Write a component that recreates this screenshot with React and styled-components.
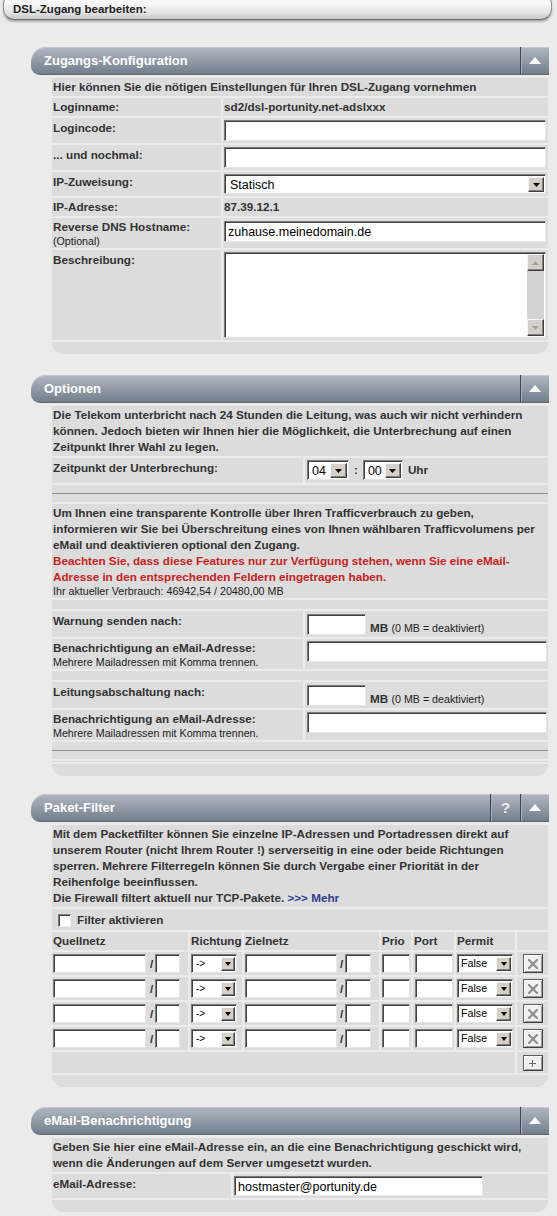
import React from 'react';
import styled, { createGlobalStyle } from 'styled-components';

const GlobalStyle = createGlobalStyle`
  html, body { margin: 0; padding: 0; background: #ebebeb; }
  body { font-family: "Liberation Sans", Arial, Helvetica, sans-serif; color: #333; }
  * { box-sizing: border-box; }
`;

const Page = styled.div`
  width: 557px;
  height: 1216px;
  overflow: hidden;
  background: #ebebeb;
`;

const TopBar = styled.div`
  margin: -7px 5px 0 3px;
  height: 27px;
  padding: 8px 0 0 9px;
  border: 1px solid #8e8e8e;
  border-bottom-color: #6a6a6a;
  border-radius: 11px;
  background: linear-gradient(#ffffff 0%, #f6f6f6 40%, #e2e2e2 75%, #c9c9c9 100%);
  box-shadow: 0 2px 2px rgba(0, 0, 0, 0.28);
  font-size: 11.5px;
  font-weight: bold;
  line-height: 14px;
  color: #222;
`;

const Sections = styled.div`
  padding: 27px 0 0 31px;
`;

const Section = styled.div`
  width: 518px;
  margin-bottom: ${(p) => p.$mb ?? 18}px;
`;

const HeaderBar = styled.div`
  display: flex;
  height: 28px;
  border-radius: 15px 0 0 9px;
  background: linear-gradient(#b0b7c2 0%, #969eab 45%, #737d8c 100%);
  border-bottom: 1px solid #5d6674;
  box-shadow: inset 0 1px 0 #c4c9d1;
`;

const HeaderTitle = styled.div`
  flex: 1;
  padding-left: 13px;
  font-size: 13px;
  font-weight: bold;
  line-height: 27px;
  color: #fff;
`;

const HeaderBtn = styled.div`
  width: ${(p) => p.$w ?? 29}px;
  display: flex;
  align-items: center;
  justify-content: center;
  border-left: 1px solid #3f4652;
  box-shadow: inset 1px 0 0 #a9b0bb;
  color: #ececec;
  font-size: 15px;
  font-weight: bold;
`;

const Table = styled.table`
  margin: 1px 0 0 19px;
  width: 500px;
  border-spacing: 2px;
  border-collapse: separate;
  table-layout: fixed;
`;

const Col = styled.col`
  width: ${(p) => p.$w}px;
`;

const Td = styled.td`
  background: #dcdcdc;
  padding: ${(p) => p.$pad ?? '1px'};
  vertical-align: ${(p) => p.$va ?? 'top'};
  text-align: ${(p) => p.$align ?? 'left'};
  font-size: 11.7px;
  font-weight: bold;
  line-height: 16px;
  color: #333;
  white-space: ${(p) => (p.$nowrap ? 'nowrap' : 'normal')};
  height: ${(p) => (p.$h ? `${p.$h}px` : 'auto')};
`;

const SpacerTd = styled.td`
  background: #dcdcdc;
  padding: 0;
  height: ${(p) => p.$h}px;
  font-size: 0;
  line-height: 0;
`;

const FooterTd = styled.td`
  background: #dcdcdc;
  padding: 0;
  height: 12px;
  border-radius: 0 0 11px 11px;
`;

const HrTd = styled.td`
  background: #dcdcdc;
  padding: 8px 0;
`;

const HrLine = styled.div`
  height: 1px;
  background: #8d8d8d;
`;

const Small = styled.span`
  display: block;
  font-size: 10.7px;
  font-weight: normal;
  line-height: 12px;
  color: #222;
`;

const InlineSmall = styled.span`
  font-size: 10.7px;
  font-weight: normal;
  color: #222;
`;

const Red = styled.span`
  color: #c9221d;
`;

const Link = styled.a`
  color: #2b3f8e;
  text-decoration: none;
`;

const Input = styled.input`
  display: block;
  width: ${(p) => p.$w}px;
  height: ${(p) => p.$h ?? 21}px;
  margin: 0;
  padding: 1px 2px 0 3px;
  border: 1px solid;
  border-color: #7b7b7b #e6e6e6 #e6e6e6 #7b7b7b;
  box-shadow: inset 1px 1px 0 #404040;
  background: #fff;
  font-family: "Liberation Sans", Arial, sans-serif;
  font-size: 12.5px;
  color: #000;
  outline: none;
`;

const SelectBox = styled.div`
  display: flex;
  align-items: stretch;
  width: ${(p) => p.$w}px;
  height: ${(p) => p.$h ?? 20}px;
  padding: 2px 1px 1px 2px;
  border: 1px solid;
  border-color: #7b7b7b #e6e6e6 #e6e6e6 #7b7b7b;
  box-shadow: inset 1px 1px 0 #404040;
  background: #fff;
`;

const SelectText = styled.span`
  flex: 1;
  padding-left: ${(p) => p.$pl ?? 3}px;
  font-size: ${(p) => p.$fs ?? 12.5}px;
  font-weight: normal;
  line-height: ${(p) => p.$lh ?? 16}px;
  color: #000;
  white-space: nowrap;
  overflow: hidden;
`;

const SelectBtn = styled.span`
  width: ${(p) => p.$w ?? 16}px;
  display: flex;
  align-items: center;
  justify-content: center;
  background: #d4d0c8;
  border: 1px solid;
  border-color: #f4f4f4 #404040 #404040 #f4f4f4;
  box-shadow: inset -1px -1px 0 #808080;
`;

const TextAreaBox = styled.div`
  display: flex;
  justify-content: flex-end;
  width: 322px;
  height: 86px;
  padding: 1px;
  border: 1px solid;
  border-color: #7b7b7b #e6e6e6 #e6e6e6 #7b7b7b;
  box-shadow: inset 1px 1px 0 #404040;
  background: #fff;
`;

const ScrollBar = styled.div`
  width: 17px;
  display: flex;
  flex-direction: column;
  background: #d3d3d3;
`;

const ScrollBtn = styled.div`
  height: 17px;
  display: flex;
  align-items: center;
  justify-content: center;
  background: #d4d0c8;
  border: 1px solid;
  border-color: #f4f4f4 #404040 #404040 #f4f4f4;
  box-shadow: inset -1px -1px 0 #808080;
`;

const ScrollTrack = styled.div`
  flex: 1;
`;

const TimeRow = styled.div`
  display: flex;
  align-items: center;
  gap: 5px;
  padding-top: 1px;
`;

const InputWithUnit = styled.div`
  display: flex;
  align-items: flex-end;
  gap: 4px;
  padding-top: 1px;
`;

const UnitText = styled.span`
  line-height: 16px;
  margin-bottom: -1px;
`;

const CheckRow = styled.label`
  display: flex;
  align-items: center;
  gap: 6px;
  padding: 2px 0 1px 5px;
`;

const CheckBox = styled.span`
  width: 13px;
  height: 13px;
  background: #fff;
  border: 1px solid;
  border-color: #808080 #f0f0f0 #f0f0f0 #808080;
  box-shadow: inset 1px 1px 0 #404040;
`;

const CellFlex = styled.div`
  display: flex;
  align-items: center;
  justify-content: ${(p) => p.$justify ?? 'flex-start'};
  padding: ${(p) => p.$pad ?? '0'};
`;

const Slash = styled.span`
  padding: 0 ${(p) => p.$pr ?? 2}px 0 ${(p) => p.$pl ?? 4}px;
  line-height: 16px;
`;

const IconBtn = styled.div`
  width: 20px;
  height: ${(p) => p.$h ?? 19}px;
  display: flex;
  align-items: center;
  justify-content: center;
  background: #efefef;
  border: 1px solid;
  border-color: #5c5c5c #404040 #404040 #5c5c5c;
  box-shadow: inset 1px 1px 0 #ffffff, inset -1px -1px 0 #9a9a9a;
`;

const Tri = ({ dir = 'up', color = '#fff', w = 12, h = 7 }) => (
  <svg width={w} height={h} viewBox={`0 0 ${w} ${h}`} style={{ display: 'block' }}>
    <polygon
      points={dir === 'up' ? `0,${h} ${w / 2},0 ${w},${h}` : `0,0 ${w},0 ${w / 2},${h}`}
      fill={color}
    />
  </svg>
);

const XIcon = () => (
  <svg width="10" height="10" viewBox="0 0 10 10" style={{ display: 'block' }}>
    <path d="M1 1 L9 9 M9 1 L1 9" stroke="#8e8e8e" strokeWidth="2.2" strokeLinecap="square" />
  </svg>
);

const PlusIcon = () => (
  <svg width="7" height="7" viewBox="0 0 7 7" style={{ display: 'block' }}>
    <path d="M3.5 0 V7 M0 3.5 H7" stroke="#666" strokeWidth="1" />
  </svg>
);

const Header = ({ title, help }) => (
  <HeaderBar>
    <HeaderTitle>{title}</HeaderTitle>
    {help && <HeaderBtn $w={30}>?</HeaderBtn>}
    <HeaderBtn>
      <Tri dir="up" color="#fff" w={12} h={7} />
    </HeaderBtn>
  </HeaderBar>
);

const Select = ({ w, h, text, fs, lh, bw, tw, th, pl }) => (
  <SelectBox $w={w} $h={h}>
    <SelectText $fs={fs} $lh={lh} $pl={pl}>{text}</SelectText>
    <SelectBtn $w={bw}>
      <Tri dir="down" color="#000" w={tw ?? 7} h={th ?? 4} />
    </SelectBtn>
  </SelectBox>
);

const FilterRow = () => (
  <tr>
    <Td $pad="2px 1px">
      <CellFlex>
        <Input $w={93} $h={19} readOnly />
        <Slash>/</Slash>
        <Input $w={25} $h={19} readOnly />
      </CellFlex>
    </Td>
    <Td $pad="2px 1px">
      <Select w={46} h={19} text="->" fs={10} lh={13} bw={14} tw={6} th={4} pl={2} />
    </Td>
    <Td $pad="2px 1px">
      <CellFlex>
        <Input $w={92} $h={19} readOnly />
        <Slash $pl={3}>/</Slash>
        <Input $w={26} $h={19} readOnly />
      </CellFlex>
    </Td>
    <Td $pad="2px 1px">
      <Input $w={28} $h={19} readOnly />
    </Td>
    <Td $pad="2px 1px 2px 2px">
      <Input $w={38} $h={19} readOnly />
    </Td>
    <Td $pad="2px 1px">
      <Select w={56} h={19} text="False" fs={10.7} lh={13} bw={15} tw={6} th={4} pl={1} />
    </Td>
    <Td $pad="2px 1px">
      <CellFlex $justify="center">
        <IconBtn>
          <XIcon />
        </IconBtn>
      </CellFlex>
    </Td>
  </tr>
);

export default function App() {
  return (
    <>
      <GlobalStyle />
      <Page>
        <TopBar>DSL-Zugang bearbeiten:</TopBar>
        <Sections>
          {/* Zugangs-Konfiguration */}
          <Section $mb={19}>
            <Header title="Zugangs-Konfiguration" />
            <Table>
              <colgroup>
                <Col $w={169} />
                <Col $w={325} />
              </colgroup>
              <tbody>
                <tr>
                  <Td colSpan={2} $nowrap>
                    Hier können Sie die nötigen Einstellungen für Ihren DSL-Zugang vornehmen
                  </Td>
                </tr>
                <tr>
                  <Td>Loginname:</Td>
                  <Td>sd2/dsl-portunity.net-adslxxx</Td>
                </tr>
                <tr>
                  <Td $pad="2px 1px">Logincode:</Td>
                  <Td $pad="2px 1px">
                    <Input $w={322} readOnly />
                  </Td>
                </tr>
                <tr>
                  <Td $pad="2px 1px">... und nochmal:</Td>
                  <Td $pad="2px 1px">
                    <Input $w={322} readOnly />
                  </Td>
                </tr>
                <tr>
                  <Td $pad="2px 1px">IP-Zuweisung:</Td>
                  <Td $pad="2px 1px">
                    <Select w={322} h={20} text="Statisch" />
                  </Td>
                </tr>
                <tr>
                  <Td>IP-Adresse:</Td>
                  <Td>87.39.12.1</Td>
                </tr>
                <tr>
                  <Td>
                    Reverse DNS Hostname:
                    <Small>(Optional)</Small>
                  </Td>
                  <Td $pad="3px 1px 1px">
                    <Input $w={322} $h={21} readOnly defaultValue="zuhause.meinedomain.de" />
                  </Td>
                </tr>
                <tr>
                  <Td $pad="2px 1px">Beschreibung:</Td>
                  <Td $pad="2px 1px 2px">
                    <TextAreaBox>
                      <ScrollBar>
                        <ScrollBtn>
                          <Tri dir="up" color="#a2a2a2" w={7} h={4} />
                        </ScrollBtn>
                        <ScrollTrack />
                        <ScrollBtn>
                          <Tri dir="down" color="#a2a2a2" w={7} h={4} />
                        </ScrollBtn>
                      </ScrollBar>
                    </TextAreaBox>
                  </Td>
                </tr>
                <tr>
                  <FooterTd colSpan={2} />
                </tr>
              </tbody>
            </Table>
          </Section>

          {/* Optionen */}
          <Section $mb={16}>
            <Header title="Optionen" />
            <Table>
              <colgroup>
                <Col $w={251} />
                <Col $w={243} />
              </colgroup>
              <tbody>
                <tr>
                  <Td colSpan={2} $nowrap>
                    Die Telekom unterbricht nach 24 Stunden die Leitung, was auch wir nicht verhindern
                    <br />
                    können. Jedoch bieten wir Ihnen hier die Möglichkeit, die Unterbrechung auf einen
                    <br />
                    Zeitpunkt Ihrer Wahl zu legen.
                  </Td>
                </tr>
                <tr>
                  <Td $pad="2px 1px">Zeitpunkt der Unterbrechung:</Td>
                  <Td $pad="1px 1px 3px 2px">
                    <TimeRow>
                      <Select w={42} h={20} text="04" bw={17} pl={2} />
                      <span>:</span>
                      <Select w={40} h={20} text="00" bw={16} pl={2} />
                      <span>Uhr</span>
                    </TimeRow>
                  </Td>
                </tr>
                <tr>
                  <HrTd colSpan={2}>
                    <HrLine />
                  </HrTd>
                </tr>
                <tr>
                  <Td colSpan={2} $nowrap>
                    Um Ihnen eine transparente Kontrolle über Ihren Trafficverbrauch zu geben,
                    <br />
                    informieren wir Sie bei Überschreitung eines von Ihnen wählbaren Trafficvolumens per
                    <br />
                    eMail und deaktivieren optional den Zugang.
                    <br />
                    <Red>
                      Beachten Sie, dass diese Features nur zur Verfügung stehen, wenn Sie eine eMail-
                      <br />
                      Adresse in den entsprechenden Feldern eingetragen haben.
                    </Red>
                    <Small>Ihr aktueller Verbrauch: 46942,54 / 20480,00 MB</Small>
                  </Td>
                </tr>
                <tr>
                  <SpacerTd colSpan={2} $h={9} />
                </tr>
                <tr>
                  <Td $pad="2px 1px">Warnung senden nach:</Td>
                  <Td $pad="2px 1px 2px 2px">
                    <InputWithUnit>
                      <Input $w={59} readOnly />
                      <UnitText>
                        MB <InlineSmall>(0 MB = deaktiviert)</InlineSmall>
                      </UnitText>
                    </InputWithUnit>
                  </Td>
                </tr>
                <tr>
                  <Td>
                    Benachrichtigung an eMail-Adresse:
                    <Small>Mehrere Mailadressen mit Komma trennen.</Small>
                  </Td>
                  <Td $pad="2px 1px 1px 2px">
                    <Input $w={240} readOnly />
                  </Td>
                </tr>
                <tr>
                  <SpacerTd colSpan={2} $h={9} />
                </tr>
                <tr>
                  <Td $pad="2px 1px">Leitungsabschaltung nach:</Td>
                  <Td $pad="2px 1px 2px 2px">
                    <InputWithUnit>
                      <Input $w={59} readOnly />
                      <UnitText>
                        MB <InlineSmall>(0 MB = deaktiviert)</InlineSmall>
                      </UnitText>
                    </InputWithUnit>
                  </Td>
                </tr>
                <tr>
                  <Td>
                    Benachrichtigung an eMail-Adresse:
                    <Small>Mehrere Mailadressen mit Komma trennen.</Small>
                  </Td>
                  <Td $pad="2px 1px 1px 2px">
                    <Input $w={240} readOnly />
                  </Td>
                </tr>
                <tr>
                  <HrTd colSpan={2}>
                    <HrLine />
                  </HrTd>
                </tr>
                <tr>
                  <SpacerTd colSpan={2} $h={1} />
                </tr>
                <tr>
                  <FooterTd colSpan={2} />
                </tr>
              </tbody>
            </Table>
          </Section>

          {/* Paket-Filter */}
          <Section $mb={18}>
            <Header title="Paket-Filter" help />
            <Table>
              <colgroup>
                <Col $w={136} />
                <Col $w={52} />
                <Col $w={135} />
                <Col $w={30} />
                <Col $w={41} />
                <Col $w={59} />
                <Col $w={31} />
              </colgroup>
              <tbody>
                <tr>
                  <Td colSpan={7} $nowrap>
                    Mit dem Packetfilter können Sie einzelne IP-Adressen und Portadressen direkt auf
                    <br />
                    unserem Router (nicht Ihrem Router !) serverseitig in eine oder beide Richtungen
                    <br />
                    sperren. Mehrere Filterregeln können Sie durch Vergabe einer Priorität in der
                    <br />
                    Reihenfolge beeinflussen.
                    <br />
                    Die Firewall filtert aktuell nur TCP-Pakete. <Link href="#">&gt;&gt;&gt; Mehr</Link>
                  </Td>
                </tr>
                <tr>
                  <Td colSpan={7} $pad="1px">
                    <CheckRow>
                      <CheckBox />
                      Filter aktivieren
                    </CheckRow>
                  </Td>
                </tr>
                <tr>
                  <Td>Quellnetz</Td>
                  <Td>Richtung</Td>
                  <Td>Zielnetz</Td>
                  <Td>Prio</Td>
                  <Td>Port</Td>
                  <Td>Permit</Td>
                  <Td />
                </tr>
                <FilterRow />
                <FilterRow />
                <FilterRow />
                <FilterRow />
                <tr>
                  <Td colSpan={6} />
                  <Td $pad="3px 1px 2px">
                    <CellFlex $justify="center">
                      <IconBtn $h={16}>
                        <PlusIcon />
                      </IconBtn>
                    </CellFlex>
                  </Td>
                </tr>
                <tr>
                  <FooterTd colSpan={7} />
                </tr>
              </tbody>
            </Table>
          </Section>

          {/* eMail-Benachrichtigung */}
          <Section $mb={0}>
            <Header title="eMail-Benachrichtigung" />
            <Table>
              <colgroup>
                <Col $w={179} />
                <Col $w={315} />
              </colgroup>
              <tbody>
                <tr>
                  <Td colSpan={2} $nowrap>
                    Geben Sie hier eine eMail-Adresse ein, an die eine Benachrichtigung geschickt wird,
                    <br />
                    wenn die Änderungen auf dem Server umgesetzt wurden.
                  </Td>
                </tr>
                <tr>
                  <Td $pad="2px 1px">eMail-Adresse:</Td>
                  <Td $pad="2px 1px">
                    <Input $w={249} $h={20} readOnly defaultValue="hostmaster@portunity.de" />
                  </Td>
                </tr>
                <tr>
                  <FooterTd colSpan={2} />
                </tr>
              </tbody>
            </Table>
          </Section>
        </Sections>
      </Page>
    </>
  );
}
